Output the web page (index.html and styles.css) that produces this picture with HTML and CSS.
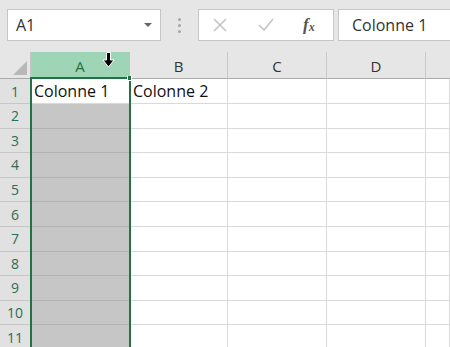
FILE: index.html
```html
<!DOCTYPE html>
<html lang="fr">
<head>
  <meta charset="UTF-8" />
  <title>Classeur1 - Excel</title>
  <link rel="stylesheet" href="styles.css">
</head>
<body>
  <div class="formula-bar">
    <div class="name-box">
      <span>A1</span>
      <span class="caret"></span>
    </div>
    <div class="grip">
      <i></i><i></i><i></i>
    </div>
    <div class="buttons">
      <svg class="btn" width="14" height="14" viewBox="0 0 14 14">
        <path d="M1 1 L13 13 M13 1 L1 13" stroke="#c4c4c4" stroke-width="1.6" fill="none"/>
      </svg>
      <svg class="btn" width="16" height="14" viewBox="0 0 16 14">
        <path d="M1 7 L6 12 L15 1" stroke="#c4c4c4" stroke-width="1.6" fill="none"/>
      </svg>
      <span class="fx">f<sub>x</sub></span>
    </div>
    <div class="formula-input">Colonne 1</div>
  </div>

  <div class="sheet">
    <div class="grid">
      <div class="corner"><span class="tri"></span></div>
      <div class="col-head active">A</div>
      <div class="col-head">B</div>
      <div class="col-head">C</div>
      <div class="col-head">D</div>
      <div class="col-head last"></div>

      <div class="row-head">1</div>
      <div class="cell">Colonne 1</div>
      <div class="cell">Colonne 2</div>
      <div class="cell"></div>
      <div class="cell"></div>
      <div class="cell"></div>
    </div>
    <div class="selection"><span class="handle"></span></div>
    <svg class="cursor" width="13" height="16" viewBox="0 0 13 16">
      <path d="M4.5 0.5 H8.5 V8 H12 L6.5 15 L1 8 H4.5 Z" fill="#000" stroke="#fff" stroke-width="1"/>
    </svg>
  </div>

  <script>
    // remplir les lignes 2 à 11
    const grid = document.querySelector('.grid');
    for (let r = 2; r <= 11; r++) {
      const head = document.createElement('div');
      head.className = 'row-head';
      head.textContent = r;
      grid.appendChild(head);
      for (let c = 0; c < 5; c++) {
        const cell = document.createElement('div');
        cell.className = c === 0 ? 'cell selected' : 'cell';
        grid.appendChild(cell);
      }
    }
  </script>
</body>
</html>
```

FILE: styles.css
```css
:root {
  --xl-green: #217346;
  --head-bg: #e6e6e6;
  --grid-line: #dadada;
  --text: #222222;
}

* {
  margin: 0;
  padding: 0;
  box-sizing: border-box;
}

html {
  overflow: hidden;
}

body {
  font-family: "Open Sans", "Noto Sans", sans-serif;
  background: var(--head-bg);
  color: var(--text);
  width: 450px;
  height: 347px;
  overflow: hidden;
}

/* barre de formule */
.formula-bar {
  height: 52px;
  display: flex;
  align-items: flex-start;
  padding-top: 9px;
  padding-left: 7px;
}

.name-box {
  width: 154px;
  height: 32px;
  background: #fff;
  border: 1px solid #c6c6c6;
  display: flex;
  align-items: center;
  justify-content: space-between;
  padding: 0 8px 0 8px;
  font-size: 16px;
  color: #333;
}

.caret {
  width: 0;
  height: 0;
  border-left: 4px solid transparent;
  border-right: 4px solid transparent;
  border-top: 4px solid #666;
}

.grip {
  width: 37px;
  height: 32px;
  display: flex;
  flex-direction: column;
  align-items: center;
  justify-content: center;
  gap: 3px;
}

.grip i {
  width: 3px;
  height: 3px;
  border-radius: 50%;
  background: #a6a6a6;
}

.buttons {
  width: 136px;
  height: 32px;
  background: #fff;
  border: 1px solid #c6c6c6;
  display: flex;
  align-items: center;
  padding-left: 14px;
  gap: 31px;
}

.fx {
  font-family: "Liberation Serif", serif;
  font-style: italic;
  font-weight: bold;
  font-size: 17px;
  color: #555;
  margin-left: -2px;
}

.fx sub {
  font-size: 12px;
  vertical-align: -1px;
}

.formula-input {
  margin-left: 4px;
  flex: 1;
  height: 32px;
  background: #fff;
  border: 1px solid #c6c6c6;
  border-right: none;
  font-size: 16px;
  line-height: 30px;
  padding-left: 13px;
  color: #333;
}

/* feuille */
.sheet {
  position: relative;
  background: #fff;
  height: 295px;
  overflow: hidden;
}

.grid {
  display: grid;
  grid-template-columns: 31px 99px 98px 99px 99px 1fr;
  grid-template-rows: 27px 25px repeat(10, 24.6px);
}

.corner {
  background: var(--head-bg);
  border-right: 1px solid #c6c6c6;
  border-bottom: 1px solid #ababab;
  position: relative;
}

.tri {
  position: absolute;
  right: 3px;
  bottom: 3px;
  width: 0;
  height: 0;
  border-left: 14px solid transparent;
  border-bottom: 14px solid #b8b8b8;
}

.col-head {
  background: var(--head-bg);
  border-right: 1px solid #c8c8c8;
  border-bottom: 1px solid #ababab;
  font-size: 15px;
  color: #333;
  display: flex;
  align-items: center;
  justify-content: center;
  padding-top: 1px;
}

.col-head.active {
  background: #9fd5b7;
  color: var(--xl-green);
  border-right-color: #9fd5b7;
  border-bottom-color: var(--xl-green);
}

.col-head.last {
  border-right: none;
}

.row-head {
  background: #e1e1e1;
  border-right: 1px solid #c6c6c6;
  border-bottom: 1px solid #c6c6c6;
  font-size: 14px;
  color: #2c6e50;
  display: flex;
  align-items: center;
  justify-content: center;
}

.cell {
  border-right: 1px solid var(--grid-line);
  border-bottom: 1px solid var(--grid-line);
  font-size: 16px;
  line-height: 24px;
  padding-left: 3px;
  white-space: nowrap;
  color: #111;
}

.cell.selected {
  background: #c6c6c6;
  border-bottom-color: #b2b2b2;
}

.selection {
  position: absolute;
  left: 30px;
  top: 25px;
  width: 101px;
  height: 270px;
  border: 2px solid var(--xl-green);
  border-bottom: none;
}

.handle {
  position: absolute;
  right: -3px;
  top: -3px;
  width: 5px;
  height: 5px;
  background: var(--xl-green);
  border: 1px solid #fff;
  border-top: none;
}

.cursor {
  position: absolute;
  left: 102px;
  top: 0px;
}
```
